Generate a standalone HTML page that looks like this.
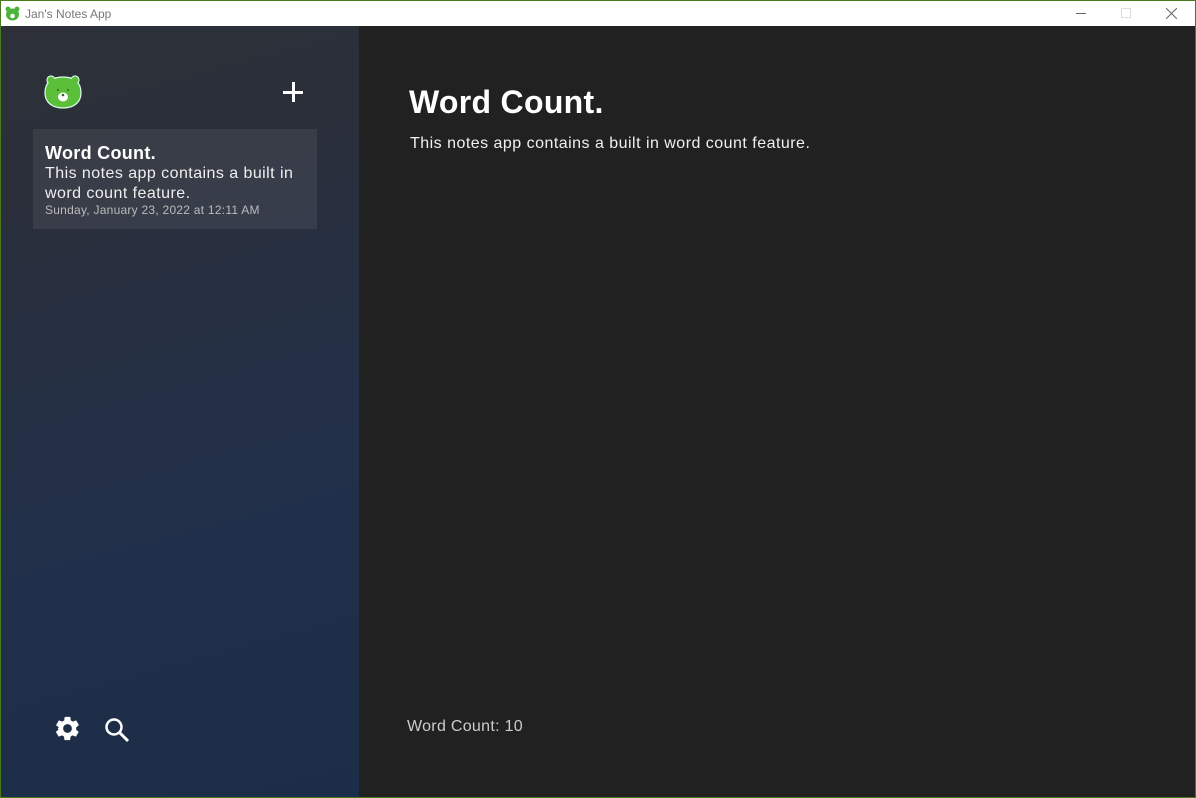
<!DOCTYPE html>
<html><head><style>
*{margin:0;padding:0;box-sizing:border-box}
body{width:1196px;height:798px;overflow:hidden;background:#4a7a1e;font-family:"Liberation Sans",sans-serif;position:relative}
.win{position:absolute;left:1px;top:1px;width:1194px;height:796px;background:#212121;overflow:hidden}
.tb{position:absolute;left:0;top:0;width:1194px;height:25px;background:#fff}
.tb .t{position:absolute;left:24px;top:6px;font-size:12px;color:#777}
.side{position:absolute;left:0;top:25px;width:358px;height:771px;background:linear-gradient(165deg,#2d3038 0%,#2a2f3a 20%,#22304a 60%,#1b2d48 100%)}
.card{position:absolute;left:32px;top:103px;width:284px;height:100px;background:rgba(255,255,255,0.07)}
.main{position:absolute;left:358px;top:25px;width:836px;height:771px;background:#212121;color:#fff}
</style></head><body>
<div class="win">
<div class="tb">
<svg style="position:absolute;left:4px;top:5px" width="15" height="15" viewBox="0 0 15 15"><circle cx="3" cy="3" r="2.5" fill="#4cb33a"/><circle cx="12" cy="3" r="2.5" fill="#4cb33a"/><ellipse cx="7.5" cy="8.5" rx="6.5" ry="6" fill="#4cb33a"/><circle cx="7.5" cy="10" r="2.3" fill="#fff"/></svg>
<div class="t">Jan's Notes App</div>
<div style="position:absolute;left:1075px;top:12px;width:10px;height:1px;background:#666"></div>
<div style="position:absolute;left:1120px;top:7px;width:10px;height:10px;border:1px solid #ddd"></div>
<svg style="position:absolute;left:1165px;top:7px" width="11" height="11"><path d="M0 0L11 11M11 0L0 11" stroke="#666" stroke-width="1"/></svg>
</div>
<div class="side">
<svg style="position:absolute;left:43px;top:47px" width="38" height="36" viewBox="0 0 38 36"><g fill="#5cbf3a" stroke="#dfe" stroke-width="1.2"><circle cx="7" cy="7" r="4"/><circle cx="31" cy="7" r="4"/><path d="M19 4C29 4 37 8 37 20C37 30 29 35 19 35C9 35 1 30 1 20C1 8 9 4 19 4Z"/></g><circle cx="7" cy="7" r="3.4" fill="#5cbf3a"/><circle cx="31" cy="7" r="3.4" fill="#5cbf3a"/><circle cx="14" cy="17" r="1" fill="#2a6a1a"/><circle cx="24" cy="17" r="1" fill="#2a6a1a"/><ellipse cx="19" cy="24" rx="5" ry="4.5" fill="#fff"/><circle cx="19" cy="22" r="1.3" fill="#2a6a1a"/></svg>
<div style="position:absolute;left:282px;top:65px;width:20px;height:3px;background:#fff"></div>
<div style="position:absolute;left:290.5px;top:56px;width:3px;height:20px;background:#fff"></div>
<div class="card">
<div style="position:absolute;left:12px;top:14px;font-size:18px;font-weight:bold;color:#fff;letter-spacing:0.3px">Word Count.</div>
<div style="position:absolute;left:12px;top:35px;font-size:16px;line-height:20px;color:#eee;width:275px;letter-spacing:0.45px">This notes app contains a built in word count feature.</div>
<div style="position:absolute;left:12px;top:74px;font-size:12px;color:#bbb;letter-spacing:0.25px">Sunday, January 23, 2022 at 12:11 AM</div>
</div>
<svg style="position:absolute;left:52px;top:688px" width="29" height="29" viewBox="0 0 24 24"><path fill="#fff" d="M19.14 12.94c.04-.3.06-.61.06-.94 0-.32-.02-.64-.07-.94l2.03-1.58a.49.49 0 00.12-.61l-1.92-3.32a.488.488 0 00-.59-.22l-2.39.96c-.5-.38-1.030-.7-1.62-.94l-.36-2.54a.484.484 0 00-.48-.41h-3.84c-.24 0-.43.17-.47.41l-.36 2.54c-.59.24-1.13.57-1.62.94l-2.39-.96c-.22-.08-.47 0-.59.22L2.74 8.87c-.12.21-.8.47.12.61l2.03 1.58c-.5.3-.9.63-.9.94s.2.64.7.94l-2.03 1.58a.49.49 0 00-.12.61l1.92 3.32c.12.22.37.29.59.22l2.39-.96c.5.38 1.03.7 1.62.94l.36 2.54c.5.24.24.41.48.41h3.84c.24 0 .44-.17.47-.41l.36-2.54c.59-.24 1.13-.56 1.62-.94l2.39.96c.22.08.47 0 .59-.22l1.92-3.32c.12-.22.07-.47-.12-.61l-2.01-1.58zM12 15.6c-1.98 0-3.6-1.62-3.6-3.6s1.62-3.6 3.6-3.6 3.6 1.62 3.6 3.6-1.62 3.6-3.6 3.6z"/></svg>
<svg style="position:absolute;left:103px;top:691px" width="27" height="27" viewBox="0 0 27 27"><circle cx="10" cy="10" r="7.5" fill="none" stroke="#fff" stroke-width="2.5"/><path d="M15.5 15.5L24 24" stroke="#fff" stroke-width="3"/></svg>
</div>
<div class="main">
<div style="position:absolute;left:50px;top:58px;font-size:32px;font-weight:bold;letter-spacing:0.3px">Word Count.</div>
<div style="position:absolute;left:51px;top:109px;font-size:16px;color:#f0f0f0;letter-spacing:0.48px">This notes app contains a built in word count feature.</div>
<div style="position:absolute;left:48px;top:692px;font-size:16px;color:#ccc;letter-spacing:0.3px">Word Count: 10</div>
</div>
</div>
</body></html>
